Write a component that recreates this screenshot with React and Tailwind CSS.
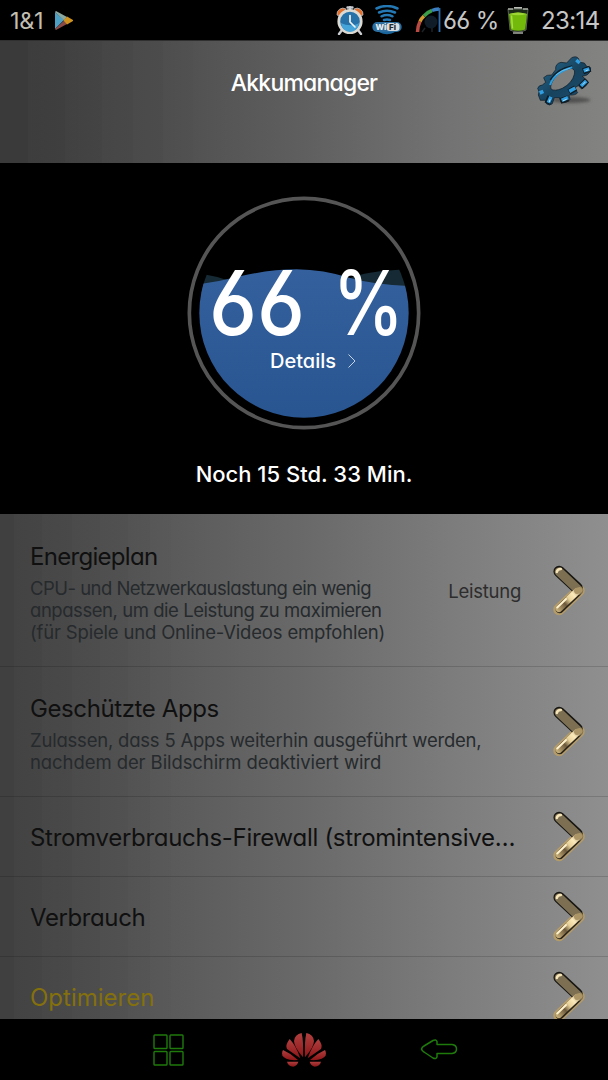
const ROWS = [
  {
    title: "Energieplan",
    titleClass: "tracking-[-0.7px]",
    lines: [
      { text: "CPU- und Netzwerkauslastung ein wenig", className: "tracking-[-0.53px]" },
      { text: "anpassen, um die Leistung zu maximieren", className: "tracking-[-0.45px]" },
      { text: "(für Spiele und Online-Videos empfohlen)", className: "tracking-[-0.18px]" },
    ],
    value: "Leistung",
    height: "h-[152px]",
  },
  {
    title: "Geschützte Apps",
    titleClass: "tracking-[-0.4px]",
    lines: [
      { text: "Zulassen, dass 5 Apps weiterhin ausgeführt werden,", className: "tracking-[-0.21px]" },
      { text: "nachdem der Bildschirm deaktiviert wird", className: "tracking-[-0.08px]" },
    ],
    height: "h-[130px]",
  },
  { title: "Stromverbrauchs-Firewall (stromintensive…", titleClass: "tracking-[-0.29px]", height: "h-20" },
  { title: "Verbrauch", titleClass: "tracking-[-0.4px]", height: "h-20" },
  { title: "Optimieren", height: "h-20", accent: true },
];

function PlayIcon() {
  return (
    <svg viewBox="0 0 18 19" className="h-[19px] w-[18px]">
      <path d="M0 1v17l9-9z" fill="#4d9fc4" />
      <path d="M0 1l1-1 11 6-3 3.5z" fill="#8aa7a0" />
      <path d="M0 18l1 1 11-6-3-3.5z" fill="#8a4a45" />
      <path d="M12 5.5l6 3.5v1l-6 3.5-3.5-4z" fill="#cf9420" />
    </svg>
  );
}

function AlarmIcon() {
  return (
    <svg viewBox="0 0 28 29" className="h-[29px] w-[28px]">
      <path d="M1 9a6 6 0 0 1 9-6L3 10z" fill="#e2702c" stroke="#b9bcc0" strokeWidth="0.8" />
      <path d="M27 9a6 6 0 0 0-9-6l7 7z" fill="#e2702c" stroke="#b9bcc0" strokeWidth="0.8" />
      <path d="M11.5 1.5h5M14 1v4M6 24l-3 4M22 24l3 4" stroke="#c9ccd0" strokeWidth="2.4" strokeLinecap="round" />
      <circle cx="14" cy="15.5" r="11.2" fill="#2571a8" stroke="#dcd8d2" strokeWidth="2.8" />
      <path d="M5 17a9 9 0 0 0 18 0c-4 3-12 3-18 0z" fill="#45a5da" />
      <path d="M14 9.5v6.5l5 5" fill="none" stroke="#f4f4f4" strokeWidth="1.7" strokeLinecap="round" />
    </svg>
  );
}

function WifiIcon() {
  return (
    <svg viewBox="0 0 30 30" className="h-[30px] w-[30px]">
      <g fill="none" stroke="#2479b5" strokeWidth="2.5" strokeLinecap="round">
        <path d="M4.500 3.500q10.500-5 21 0" />
        <path d="M7 7.500q8-3.500 16 0" />
        <path d="M9.500 11.300q5.500-2.400 11 0" />
        <path d="M12 15q3-1.200 6 0" />
      </g>
      <ellipse cx="15" cy="23.500" rx="10" ry="5.800" fill="#1a659c" />
      <rect x="0.300" y="17" width="29.400" height="10" rx="5" fill="#2c6e9f" />
      <rect x="14.500" y="18" width="13" height="8" rx="3" fill="#d9dde0" />
      <text x="3.500" y="25" fontSize="8" fontWeight="800" fill="#eeeeee" fontFamily="Inter, sans-serif">Wi</text>
      <text x="17" y="25" fontSize="8" fontWeight="800" fill="#23282c" fontFamily="Inter, sans-serif">Fi</text>
    </svg>
  );
}

function SpeedIcon() {
  return (
    <svg viewBox="0 0 26 26" className="h-[26px] w-[26px]">
      <circle cx="16" cy="15" r="6.500" fill="#101c28" />
      <path d="M7 25l3-4M17 25v-4" stroke="#1c2227" strokeWidth="1.500" />
      <g fill="none" strokeWidth="3.500">
        <path d="M2.500 25q0-5.500 2.500-10.500" stroke="#b94a42" />
        <path d="M5 14.500q1.500-3.200 4-5.500" stroke="#d39a32" />
        <path d="M9 9q3.500-4 8-5.500" stroke="#3b9c49" />
        <path d="M17 3.500q3-1.300 7-1.500" stroke="#3b7fc2" />
      </g>
      <path d="M24.500 1v24" stroke="#2f6cab" strokeWidth="1.800" />
    </svg>
  );
}

function BatteryIcon() {
  return (
    <svg viewBox="0 0 22 28" className="h-[28px] w-[22px]">
      <path d="M7 1h8v2H7z" fill="#b8bcb5" />
      <path d="M1 3h20l-2 21q-8 4-16 0z" fill="#1d2a18" stroke="#5c6258" strokeWidth="1" />
      <path d="M2 8q9-3 18 0l-1.800 15.500q-7 2.500-14.400 0z" fill="#72b90c" />
      <path d="M2 8q9-3 18 0-9 2.500-18 0z" fill="#9ed636" />
      <path d="M4.500 9.500l1 13" stroke="#a9df45" strokeWidth="1.500" />
      <path d="M6 27h10M1 3h5M16 3h5" stroke="#a5aaa0" strokeWidth="1.500" />
    </svg>
  );
}

function GearIcon() {
  return (
    <svg viewBox="30 30 180 156" className="h-[52px] w-[60px]">
      <defs>
        <linearGradient id="gear" x1="0" y1="0" x2="1" y2="1">
          <stop offset="0" stopColor="#2a6e95" />
          <stop offset="0.500" stopColor="#17435e" />
          <stop offset="1" stopColor="#1d4e70" />
        </linearGradient>
        <filter id="shade" x="-20%" y="-80%" width="140%" height="260%">
          <feGaussianBlur stdDeviation="4" />
        </filter>
      </defs>
      <ellipse cx="138" cy="165" rx="58" ry="9" fill="#3d3d3d" opacity="0.700" filter="url(#shade)" />
      <path
        fillRule="evenodd"
        fill="url(#gear)"
        stroke="#0c1a22"
        strokeWidth="2"
        strokeLinejoin="round"
        d="M42 140L38 130Q42 120 52 120L62 112 56 98Q64 88 80 90L92 74Q90 56 108 52L125 54 140 38Q154 32 160 40L165 52 178 54 185 64 197 68Q200 80 186 90L172 94 188 108Q190 120 170 132L160 122 146 130 158 142Q154 152 132 150L135 163Q126 176 108 172L104 158 88 158 82 176Q74 184 64 176L62 166 46 166 40 150ZM78 132Q88 140 112 130 142 114 148 88 152 72 138 70 108 72 88 100 74 120 78 132Z"
      />
      <path d="M78 106Q96 73 142 65" fill="none" stroke="#111f29" strokeWidth="9" />
      <path d="M75 120Q88 82 142 67" fill="none" stroke="#2b9ee0" strokeWidth="6" />
      <path d="M92 90Q110 74 134 70" fill="none" stroke="#8ccced" strokeWidth="2" />
      <g fill="none" stroke="#101b22" strokeWidth="18" strokeLinecap="butt">
        <path d="M76 154l-9 22M106 168l24-8M166 126l20-20M174 79l22-8M132 141l20-12" />
      </g>
      <g fill="none" stroke="#2f9ee2" strokeWidth="11" strokeLinecap="butt">
        <path d="M78 155l-8 18M110 166l19-8M168 123l16-15M176 77l17-5M133 139l18-10M44 144l11-5M154 45l10 9" />
      </g>
      <path d="M73 170l2-6M115 167l9-4M174 118l6-6M183 77l6-2" stroke="#b4dced" strokeWidth="3" strokeLinecap="round" />
    </svg>
  );
}

function Chevron() {
  return (
    <svg viewBox="0 0 34 54" className="h-[54px] w-[34px] shrink-0">
      <defs>
        <linearGradient id="gold" gradientUnits="userSpaceOnUse" x1="4" y1="46" x2="27" y2="25">
          <stop offset="0" stopColor="#c9b27c" />
          <stop offset="0.350" stopColor="#6b583a" />
          <stop offset="0.550" stopColor="#e8d29a" />
          <stop offset="0.750" stopColor="#fbeabb" />
          <stop offset="1" stopColor="#a08b5f" />
        </linearGradient>
      </defs>
      <g fill="none" strokeLinecap="round" strokeLinejoin="round">
        <path d="M7 45.500L27 26.500" stroke="#b49c6a" strokeWidth="11.500" />
        <path d="M7.200 7.500L25 24" stroke="#171612" strokeWidth="11.500" />
        <path d="M7.800 45L25.500 28" stroke="#2a241a" strokeWidth="8.500" />
        <path d="M7.200 7.700L26.800 26.300" stroke="#7d6f52" strokeWidth="9" />
        <path d="M7 44.500L25 27.500" stroke="url(#gold)" strokeWidth="7" />
        <path d="M5.200 43.500L14 35" stroke="#fff2cc" strokeWidth="2" />
        <path d="M4.800 8q0.500-3 4-3" stroke="#f6e5b9" strokeWidth="2.500" />
        <path d="M25 27l2.500-1" stroke="#ab9566" strokeWidth="6" />
      </g>
    </svg>
  );
}

function Gauge() {
  return (
    <div className="relative mt-[33px] h-[234px] w-[234px]">
      <svg viewBox="21 19 702 702" className="h-full w-full">
        <defs>
          <clipPath id="disc">
            <circle cx="372" cy="370" r="314" />
          </clipPath>
          <linearGradient id="water" x1="0" y1="0" x2="0" y2="1">
            <stop offset="0" stopColor="#34619d" />
            <stop offset="1" stopColor="#285490" />
          </linearGradient>
        </defs>
        <circle cx="372" cy="370" r="344" fill="none" stroke="#555555" strokeWidth="11" />
        <g clipPath="url(#disc)">
          <path d="M40 248Q100 256 150 274L500 270Q560 240 700 239V300H40Z" fill="#152a34" />
          <path d="M40 286Q110 278 180 260 270 239 350 239 430 240 510 265 590 287 710 290V700H40Z" fill="url(#water)" />
        </g>
      </svg>
      <div className="absolute inset-x-0 top-[67px] h-[80px] text-[89px] leading-[80px] font-medium text-white">
        <span className="absolute left-[22px] origin-left scale-x-[0.91] [font-feature-settings:'cv03']">66</span>
        <span className="absolute left-[146px] origin-left scale-x-[0.8]">%</span>
      </div>
      <div className="absolute top-[153px] left-[83px] flex items-center text-[20px] leading-6 font-medium text-white">
        <span>Details</span>
        <svg viewBox="0 0 8 14" className="ml-3 h-[14px] w-2" fill="none" stroke="#c5d2e2" strokeWidth="1">
          <path d="M0.500 0.500l6.500 6.500-6.500 6.500" />
        </svg>
      </div>
    </div>
  );
}

function Row({ row }) {
  return (
    <div className={`flex shrink-0 items-center border-t border-black/15 pr-[22px] pl-[30px] first:border-transparent ${row.height}`}>
      <div className="min-w-0 flex-1 pt-[2px] whitespace-nowrap">
        <div className={`text-[24px] leading-8 ${row.accent ? "text-[#84700c]" : "text-[#101010]"} ${row.titleClass ?? ""}`}>
          {row.title}
        </div>
        {row.lines && (
          <p className="mt-1 text-[18.5px] leading-[22px] text-[#262a2d]">
            {row.lines.map((line) => (
              <span key={line.text} className={`block ${line.className}`}>{line.text}</span>
            ))}
          </p>
        )}
      </div>
      {row.value && (
        <span className="mt-[3px] mr-[31px] text-[18.5px] tracking-[-0.25px] text-[#2d2d2d]">{row.value}</span>
      )}
      <Chevron />
    </div>
  );
}

function NavBar() {
  return (
    <nav className="flex h-[61px] shrink-0 items-center bg-black pl-[153px]">
      <svg viewBox="0 0 31 32" className="h-8 w-[31px]" fill="none" stroke="#1f7a0c" strokeWidth="1.400">
        <rect x="1" y="1" width="13" height="13.500" rx="0.800" />
        <rect x="17" y="1" width="13" height="13.500" rx="0.800" />
        <rect x="1" y="17.500" width="13" height="13.500" rx="0.800" />
        <rect x="17" y="17.500" width="13" height="13.500" rx="0.800" />
      </svg>
      <svg viewBox="0 0 132 102" className="ml-[98px] h-[34px] w-11">
        <defs>
          <linearGradient id="petal" x1="0" y1="0" x2="0" y2="1">
            <stop offset="0" stopColor="#b04040" />
            <stop offset="1" stopColor="#8d1517" />
          </linearGradient>
        </defs>
        {["", "matrix(-1 0 0 1 132 0)"].map((flip) => (
          <g key={flip} transform={flip} fill="url(#petal)">
            <path d="M63 73Q36 42 36 24 38 4 59 0 65 26 63 73Z" />
            <path d="M55 76L15 48Q9 36 23 18 42 38 55 76Z" />
            <path d="M48 81Q8 84 1 67-1 57 3 51 28 62 48 81Z" />
            <path d="M49 86L15 86Q18 99 34 101 46 98 49 86Z" />
          </g>
        ))}
      </svg>
      <svg viewBox="0 0 38 21" className="ml-[94px] h-[21px] w-[38px]" fill="none" stroke="#1f7a0c" strokeWidth="1.500" strokeLinejoin="round">
        <path d="M1.500 10Q2 8 4 7L13 1.500Q16 0 17 2.500V5.500H32Q36.500 6 36.500 10T32 14.500H17V18Q16 20.500 13 19L4 13Q2 12 1.500 10Z" />
      </svg>
    </nav>
  );
}

export default function App() {
  return (
    <div className="flex h-[1080px] w-[608px] flex-col overflow-hidden bg-black font-['Inter',sans-serif] [font-feature-settings:'cv11','cv03']">
      <div className="flex h-10 shrink-0 items-center pl-[10px] text-[24px] text-[#c6c6c6]">
        <span className="w-[45px] pt-px text-[23.5px] tracking-[-0.3px] text-[#c2beb2]">1&amp;1</span>
        <PlayIcon />
        <div className="ml-[263px] flex items-center">
          <AlarmIcon />
          <div className="ml-[8px]"><WifiIcon /></div>
          <div className="ml-[13px]"><SpeedIcon /></div>
          <span className="ml-[2px] w-[64px] pt-px whitespace-nowrap tracking-[-0.6px]">66 %</span>
          <BatteryIcon />
          <span className="ml-[12px] pt-px tracking-[-0.6px]">23:14</span>
        </div>
      </div>

      <header className="relative h-[123px] shrink-0 border-t border-[#303030] bg-[linear-gradient(90deg,#3a3a3a_28px,#3d3d3d_28px,#3f3f3f_65px,#414141_65px,#444444_102px,#464646_102px,#484848_133px,#4a4a4a_133px,#4c4c4c_163px,#4e4e4e_163px,#515151_193px,#525252_193px,#5f5f5f_304px,#737373_450px,#838381_608px)]">
        <h1 className="pt-[26px] text-center text-[23px] leading-8 font-medium tracking-[-0.8px] text-white">Akkumanager</h1>
        <div className="absolute top-[14px] right-[13px]">
          <GearIcon />
        </div>
      </header>

      <section className="flex h-[351px] shrink-0 flex-col items-center">
        <Gauge />
        <p className="mt-[28px] text-[22px] leading-8 font-medium whitespace-nowrap text-white">
          Noch 15 Std. 33 Min.
        </p>
      </section>

      <main className="flex min-h-0 flex-1 flex-col overflow-hidden bg-[linear-gradient(90deg,#404040_14px,#434343_14px,#454545_42px,#474747_42px,#494949_72px,#4b4b4b_72px,#4d4d4d_100px,#4f4f4f_100px,#515151_128px,#535353_128px,#555555_150px,#575757_150px,#595959_171px,#5a5a5a_171px,#696969_304px,#7c7c7c_450px,#8f8f8f_608px)]">
        {ROWS.map((row) => (
          <Row key={row.title} row={row} />
        ))}
      </main>

      <NavBar />
    </div>
  );
}
